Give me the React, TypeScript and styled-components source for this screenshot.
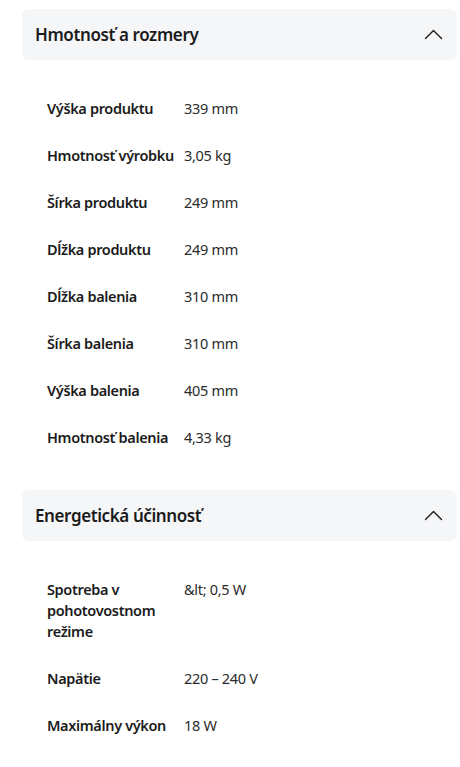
import React from 'react'
import styled, { createGlobalStyle } from 'styled-components'

type Spec = { label: string; value: string }
type Group = { title: string; specs: Spec[] }

const groups: Group[] = [
    {
        title: 'Hmotnosť a rozmery',
        specs: [
            { label: 'Výška produktu', value: '339 mm' },
            { label: 'Hmotnosť výrobku', value: '3,05 kg' },
            { label: 'Šírka produktu', value: '249 mm' },
            { label: 'Dĺžka produktu', value: '249 mm' },
            { label: 'Dĺžka balenia', value: '310 mm' },
            { label: 'Šírka balenia', value: '310 mm' },
            { label: 'Výška balenia', value: '405 mm' },
            { label: 'Hmotnosť balenia', value: '4,33 kg' },
        ],
    },
    {
        title: 'Energetická účinnosť',
        specs: [
            { label: 'Spotreba v pohotovostnom režime', value: '&lt; 0,5 W' },
            { label: 'Napätie', value: '220 – 240 V' },
            { label: 'Maximálny výkon', value: '18 W' },
        ],
    },
]

const Global = createGlobalStyle`
    body {
        margin: 0;
        background: #fff;
        font-family: "Noto Sans", "Open Sans", sans-serif;
        color: #1b1b1b;
    }
`

const Page = styled.div`
    padding: 9px 3px 0 22px;
`

const Section = styled.section`
    margin-bottom: 29px;
`

const Header = styled.div`
    height: 51px;
    display: flex;
    align-items: center;
    justify-content: space-between;
    padding: 0 14px 0 13px;
    background: #f5f6f8;
    border-radius: 7px;
`

const Title = styled.h2`
    margin: 0;
    font-size: 17px;
    font-weight: 600;
    letter-spacing: -0.4px;
    color: #1b1b1b;
`

const Table = styled.div`
    padding: 25px 0 0 25px;
`

const Row = styled.div`
    display: grid;
    grid-template-columns: 137px 1fr;
    padding: 13px 0;
    font-size: 14.5px;
    line-height: 21px;
`

const Label = styled.div`
    font-weight: 600;
    letter-spacing: -0.35px;
    padding-right: 4px;
`

const Value = styled.div`
    font-weight: 400;
    color: #2b2b2b;
    letter-spacing: -0.3px;
`

const Chevron = () => (
    <svg width="19" height="11" viewBox="0 0 19 11" fill="none">
        <path d="M1.5 9.5L9.5 1.5L17.5 9.5" stroke="#1b1b1b" strokeWidth="1.4" strokeLinecap="round" strokeLinejoin="round" />
    </svg>
)

const App = () => {
    return (
        <Page>
            <Global />
            {groups.map((group, idx) => (
                <Section key={idx}>
                    <Header>
                        <Title>{group.title}</Title>
                        <Chevron />
                    </Header>
                    <Table>
                        {group.specs.map((spec, i) => (
                            <Row key={i}>
                                <Label>{spec.label}</Label>
                                <Value>{spec.value}</Value>
                            </Row>
                        ))}
                    </Table>
                </Section>
            ))}
        </Page>
    )
}

export default App
